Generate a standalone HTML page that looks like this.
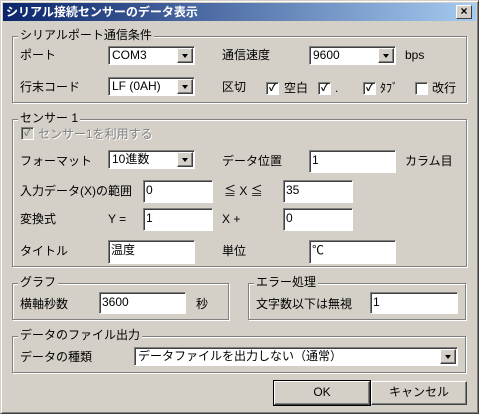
<!DOCTYPE html>
<html><head><meta charset="utf-8"><style>
*{margin:0;padding:0;box-sizing:border-box}
body{width:479px;height:414px;background:#d4d0c8;font-family:"Liberation Sans","Noto Sans CJK JP",sans-serif;font-size:12px;color:#000;position:relative;overflow:hidden}
.win{position:absolute;left:0;top:0;width:479px;height:414px;border:1px solid;border-color:#d4d0c8 #404040 #404040 #d4d0c8;box-shadow:inset 1px 1px 0 #fff,inset -1px -1px 0 #808080}
.title{position:absolute;left:3px;top:3px;width:473px;height:18px;background:linear-gradient(to right,#0a246a,#a6caf0);color:#fff;font-weight:bold;font-size:12px;line-height:18px;padding-left:3px}
.close{position:absolute;left:456px;top:5px;width:16px;height:14px;background:#d4d0c8;border:1px solid;border-color:#fff #404040 #404040 #fff;font-size:12px;line-height:11px;text-align:center;font-weight:bold;color:#000}
.a{position:absolute;white-space:nowrap;line-height:14px}
.g{position:absolute;border:1px solid #808080;box-shadow:1px 1px 0 #fff,inset 1px 1px 0 #fff}
.gl{position:absolute;background:#d4d0c8;padding:0 2px;line-height:14px;white-space:nowrap}
.in{position:absolute;background:#fff;border:1px solid;border-color:#808080 #fff #fff #808080;box-shadow:inset 1px 1px 0 #404040;padding:2px 2px;line-height:14px;white-space:nowrap}
.cb{position:absolute;background:#fff;border:1px solid;border-color:#808080 #fff #fff #808080;box-shadow:inset 1px 1px 0 #404040;padding:1px 3px;line-height:14px;white-space:nowrap}
.cb .ar{position:absolute;right:1px;top:1px;width:16px;height:15px;background:#d4d0c8;border:1px solid;border-color:#fff #404040 #404040 #fff;box-shadow:inset -1px -1px 0 #808080}
.cb .ar:after{content:"";position:absolute;left:4px;top:5px;border-left:3px solid transparent;border-right:3px solid transparent;border-top:4px solid #000}
.ck{position:absolute;width:13px;height:13px;background:#fff;border:1px solid;border-color:#808080 #fff #fff #808080;box-shadow:inset 1px 1px 0 #404040;font-size:10px;line-height:11px;text-align:center;font-weight:bold}
.btn{position:absolute;background:#d4d0c8;border:1px solid;border-color:#fff #404040 #404040 #fff;box-shadow:inset -1px -1px 0 #808080;text-align:center;line-height:21px}
</style></head><body>
<div class="win"></div>
<div class="title">シリアル接続センサーのデータ表示</div>
<div class="close">×</div>

<div class="g" style="left:12px;top:36px;width:455px;height:67px"></div>
<div class="gl" style="left:18px;top:28px">シリアルポート通信条件</div>
<div class="a" style="left:20px;top:48px">ポート</div>
<div class="cb" style="left:108px;top:46px;width:87px;height:19px">COM3<div class="ar"></div></div>
<div class="a" style="left:222px;top:48px">通信速度</div>
<div class="cb" style="left:309px;top:46px;width:87px;height:19px">9600<div class="ar"></div></div>
<div class="a" style="left:405px;top:48px">bps</div>
<div class="a" style="left:20px;top:80px">行末コード</div>
<div class="cb" style="left:108px;top:77px;width:87px;height:19px">LF (0AH)<div class="ar"></div></div>
<div class="a" style="left:222px;top:80px">区切</div>
<div class="ck" style="left:266px;top:82px">✓</div><div class="a" style="left:284px;top:81px">空白</div>
<div class="ck" style="left:318px;top:82px">✓</div><div class="a" style="left:335px;top:81px">.</div>
<div class="ck" style="left:363px;top:82px">✓</div><div class="a" style="left:380px;top:81px">ﾀﾌﾞ</div>
<div class="ck" style="left:415px;top:82px"></div><div class="a" style="left:432px;top:81px">改行</div>

<div class="g" style="left:12px;top:119px;width:455px;height:148px"></div>
<div class="gl" style="left:18px;top:111px">センサー 1</div>
<div class="ck" style="left:21px;top:127px;background:#d4d0c8;color:#808080">✓</div>
<div class="a" style="left:38px;top:127px;color:#808080;text-shadow:1px 1px 0 #fff">センサー1を利用する</div>
<div class="a" style="left:20px;top:154px">フォーマット</div>
<div class="cb" style="left:108px;top:150px;width:87px;height:19px">10進数<div class="ar"></div></div>
<div class="a" style="left:222px;top:154px">データ位置</div>
<div class="in" style="left:309px;top:150px;width:87px;height:23px">1</div>
<div class="a" style="left:405px;top:154px">カラム目</div>
<div class="a" style="left:20px;top:184px">入力データ(X)の範囲</div>
<div class="in" style="left:143px;top:180px;width:70px;height:23px">0</div>
<div class="a" style="left:224px;top:184px">≦ X ≦</div>
<div class="in" style="left:283px;top:180px;width:70px;height:23px">35</div>
<div class="a" style="left:20px;top:212px">変換式</div>
<div class="a" style="left:108px;top:212px">Y =</div>
<div class="in" style="left:143px;top:208px;width:70px;height:23px">1</div>
<div class="a" style="left:222px;top:212px">X +</div>
<div class="in" style="left:283px;top:208px;width:70px;height:23px">0</div>
<div class="a" style="left:20px;top:244px">タイトル</div>
<div class="in" style="left:108px;top:240px;width:87px;height:24px">温度</div>
<div class="a" style="left:222px;top:244px">単位</div>
<div class="in" style="left:309px;top:240px;width:87px;height:24px">℃</div>

<div class="g" style="left:12px;top:283px;width:217px;height:37px"></div>
<div class="gl" style="left:18px;top:275px">グラフ</div>
<div class="a" style="left:20px;top:297px">横軸秒数</div>
<div class="in" style="left:99px;top:292px;width:87px;height:22px">3600</div>
<div class="a" style="left:196px;top:297px">秒</div>

<div class="g" style="left:248px;top:283px;width:218px;height:37px"></div>
<div class="gl" style="left:254px;top:275px">エラー処理</div>
<div class="a" style="left:256px;top:297px">文字数以下は無視</div>
<div class="in" style="left:370px;top:292px;width:88px;height:22px">1</div>

<div class="g" style="left:12px;top:336px;width:454px;height:37px"></div>
<div class="gl" style="left:18px;top:328px">データのファイル出力</div>
<div class="a" style="left:20px;top:350px">データの種類</div>
<div class="cb" style="left:134px;top:347px;width:324px;height:19px">データファイルを出力しない（通常）<div class="ar"></div></div>

<div class="btn" style="left:274px;top:381px;width:96px;height:24px;outline:1px solid #000">OK</div>
<div class="btn" style="left:371px;top:381px;width:96px;height:24px">キャンセル</div>
</body></html>
